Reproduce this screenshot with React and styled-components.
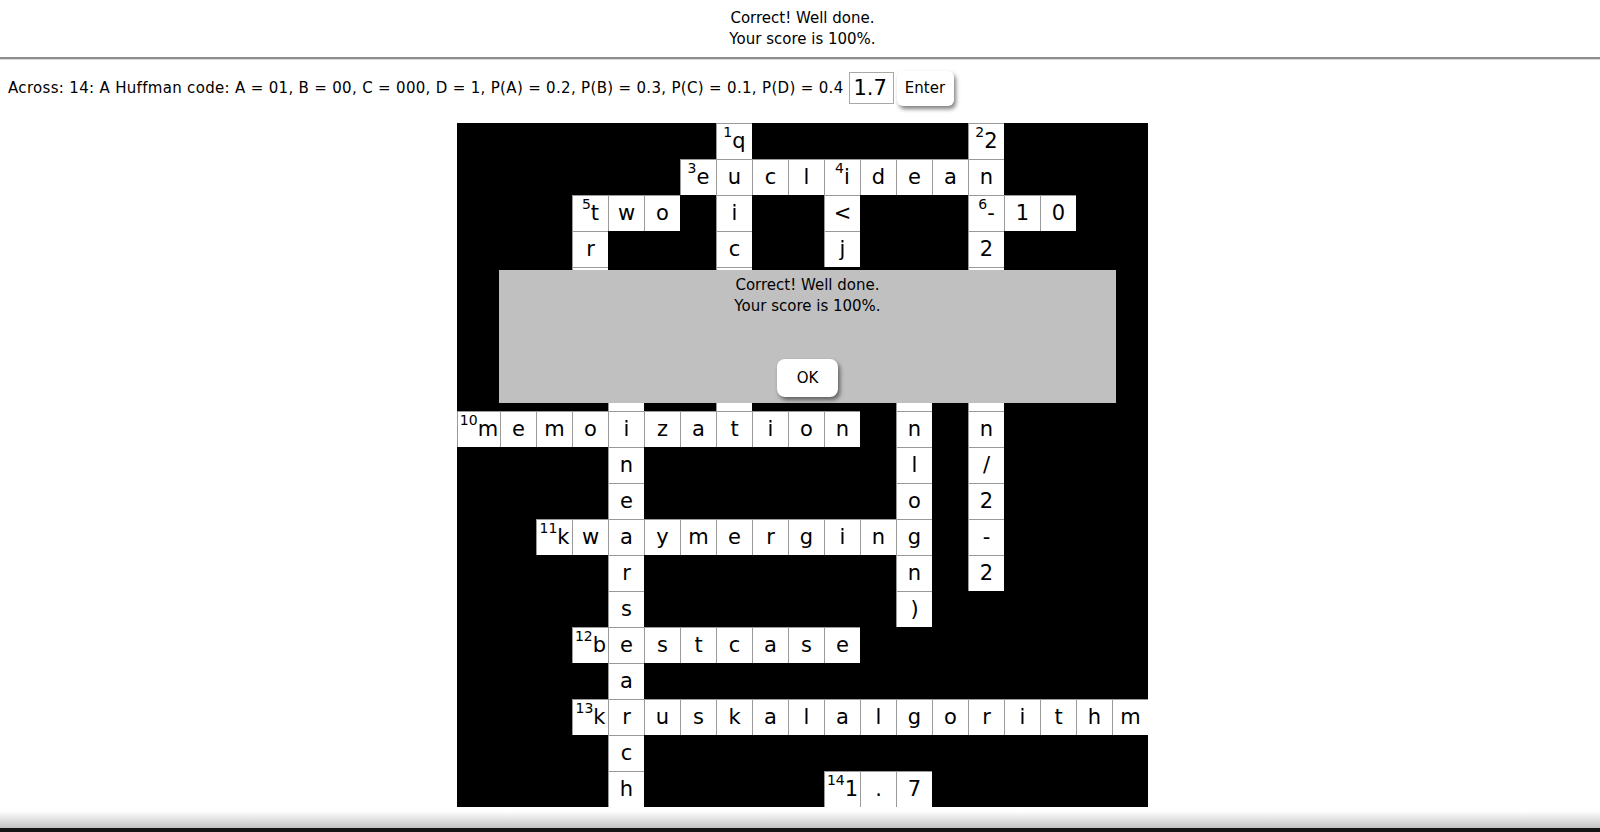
import React from "react";
import styled, { createGlobalStyle } from "styled-components";

const SIZE = 19;

const acrossWords = [
  [1, 6, "euclidean", 3],
  [2, 3, "two", 5],
  [2, 14, "-10", 6],
  [8, 0, "memoization", 10],
  [11, 2, "kwaymerging", 11],
  [14, 3, "bestcase", 12],
  [16, 3, "kruskalalgorithm", 13],
  [18, 10, "1.7", 14],
];

const downWords = [
  [0, 7, "quicksort", 1],
  [0, 14, "2n-2logn/2-2".slice(0, 8) + "n/2-2", 2],
  [1, 10, "i<j", 4],
  [2, 3, "tree", 5],
  [6, 12, "O(nlogn)", 7],
  [7, 4, "linearsearch", 8],
];

const buildGrid = () => {
  const grid = Array.from({ length: SIZE }, () => Array(SIZE).fill(null));
  const put = (r, c, ch) => {
    if (!grid[r][c]) grid[r][c] = { ch, num: null };
  };
  acrossWords.forEach(([r, c, word, num]) => {
    [...word].forEach((ch, i) => put(r, c + i, ch));
    grid[r][c].num = num;
  });
  downWords.forEach(([r, c, word, num]) => {
    [...word].forEach((ch, i) => put(r + i, c, ch));
    grid[r][c].num = num;
  });
  return grid;
};

const GlobalStyle = createGlobalStyle`
  body {
    margin: 0;
    background: #fff;
    color: #000;
    font-family: "DejaVu Sans", "Noto Sans", sans-serif;
    font-size: 15px;
  }
`;

const Page = styled.div`
  display: flex;
  flex-direction: column;
  padding-top: 8px;
`;

const Centered = styled.div`
  display: flex;
  justify-content: center;
  padding-left: 5px;
`;

const Message = styled.div`
  text-align: center;
  line-height: 21px;
`;

const Rule = styled.hr`
  margin: 7px 0 8px;
  height: 0;
  border: 0;
  border-top: 2px solid #8c8c8c;
  border-bottom: 1px solid #dadada;
`;

const ClueRow = styled.div`
  display: flex;
  align-items: center;
  height: 38px;
  margin-top: 1px;
  padding-left: 8px;
  white-space: nowrap;
`;

const ClueText = styled.span`
  letter-spacing: 0.32px;
`;

const AnswerInput = styled.input`
  box-sizing: border-box;
  width: 45px;
  height: 32px;
  margin-left: 5px;
  padding: 0 4px;
  border: 1px solid #a8a8a8;
  font-family: "DejaVu Sans", sans-serif;
  font-size: 21px;
  color: #000;
`;

const PlainButton = styled.button`
  background: #fff;
  border: none;
  color: #000;
  font-family: "DejaVu Sans", sans-serif;
  font-size: 15px;
  cursor: pointer;
  box-shadow: 2px 3px 4px rgba(0, 0, 0, 0.5);
`;

const EnterButton = styled(PlainButton)`
  width: 57px;
  height: 35px;
  margin-left: 3px;
  border-radius: 6px;
`;

const BoardWrap = styled.div`
  position: relative;
  margin-top: 16px;
`;

const Board = styled.div`
  display: grid;
  grid-template-columns: 43px repeat(${SIZE - 1}, 36px);
  grid-auto-rows: 36px;
  background: #000;
`;

const Cell = styled.div`
  box-sizing: border-box;
  background: ${(p) => (p.$open ? "#fff" : "#000")};
  border-left: 1px solid ${(p) => (p.$open ? "#9a9a9a" : "#000")};
  border-top: 1px solid ${(p) => (p.$open ? "#9a9a9a" : "#000")};
  text-align: center;
  line-height: 34px;
  font-size: 21px;
  white-space: nowrap;
`;

const Num = styled.span`
  display: inline-block;
  vertical-align: top;
  font-size: 14px;
  line-height: 17px;
`;

const Dialog = styled.div`
  position: absolute;
  left: 42px;
  top: 147px;
  width: 617px;
  height: 133px;
  box-sizing: border-box;
  padding-top: 5px;
  background: #c0c0c0;
  display: flex;
  flex-direction: column;
  align-items: center;
`;

const OkButton = styled(PlainButton)`
  width: 61px;
  height: 38px;
  margin-top: 42px;
  border-radius: 8px;
`;

const BottomEdge = styled.div`
  height: 17px;
  margin-top: 4px;
  background: linear-gradient(#ffffff, #c4c4c4);
  border-bottom: 4px solid #151515;
`;

export default function App() {
  const grid = buildGrid();
  return (
    <Page>
      <GlobalStyle />
      <Centered>
        <Message>
          Correct! Well done.
          <br />
          Your score is 100%.
        </Message>
      </Centered>
      <Rule />
      <ClueRow>
        <ClueText>
          Across: 14: A Huffman code: A = 01, B = 00, C = 000, D = 1, P(A) = 0.2, P(B) = 0.3,
          P(C) = 0.1, P(D) = 0.4
        </ClueText>
        <AnswerInput defaultValue="1.7" />
        <EnterButton>Enter</EnterButton>
      </ClueRow>
      <Centered>
        <BoardWrap>
          <Board>
            {grid.map((row, r) =>
              row.map((cell, c) => (
                <Cell key={`${r}-${c}`} $open={!!cell}>
                  {cell && cell.num && <Num>{cell.num}</Num>}
                  {cell && cell.ch}
                </Cell>
              ))
            )}
          </Board>
          <Dialog>
            <Message>
              Correct! Well done.
              <br />
              Your score is 100%.
            </Message>
            <OkButton>OK</OkButton>
          </Dialog>
        </BoardWrap>
      </Centered>
      <BottomEdge />
    </Page>
  );
}
